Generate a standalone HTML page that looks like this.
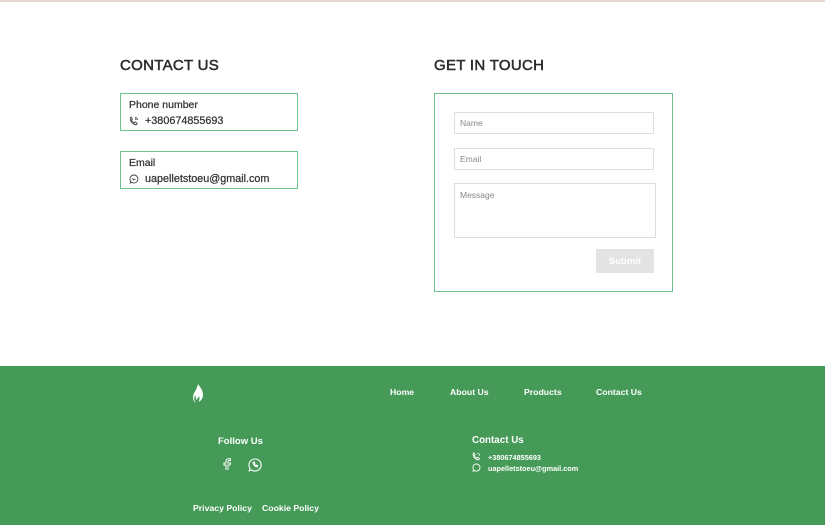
<!DOCTYPE html>
<html><head><meta charset="utf-8"><style>
*{box-sizing:border-box;margin:0;padding:0}
body{width:825px;height:525px;overflow:hidden;background:#fff;font-family:"Liberation Sans",sans-serif;color:#333;position:relative}
.top{position:absolute;left:0;top:0;width:825px;height:2px;background:#e8d6d2}
.abs{position:absolute}
h2{position:absolute;font-size:15px;font-weight:normal;letter-spacing:.3px;color:#2b2b2b;-webkit-text-stroke:.5px #2b2b2b}
.box{position:absolute;border:1px solid #6cc28c;width:178px;height:38px;padding:5px 8px}
.box .t{font-size:10.5px;color:#333;line-height:13px;-webkit-text-stroke:.25px #333}
.box .v{font-size:10.8px;color:#333;line-height:14px;margin-top:2px;display:flex;align-items:center;gap:6px;-webkit-text-stroke:.25px #333}
.form{position:absolute;left:434px;top:93px;width:239px;height:199px;border:1px solid #6cc28c}
.in{position:absolute;border:1px solid #ddd;font-size:8.5px;color:#888;padding:0 5px;display:flex;align-items:center}
.btn{position:absolute;left:161px;top:155px;width:58px;height:24px;background:#e3e3e3;color:#fff;font-size:9.5px;font-weight:bold;display:flex;align-items:center;justify-content:center}
.foot{position:absolute;left:0;top:366px;width:825px;height:159px;background:#459a58;color:#fff}
.foot .n{position:absolute;font-size:8.7px;font-weight:bold;top:21px}
.foot .s{position:absolute;font-size:8.7px;font-weight:bold}
</style></head><body>
<div class="top"></div>
<h2 style="left:120px;top:57px">CONTACT US</h2>
<h2 style="left:434px;top:57px">GET IN TOUCH</h2>
<div class="box" style="left:120px;top:93px"><div class="t">Phone number</div><div class="v"><svg width="10" height="10" viewBox="0 0 10 10" fill="none" stroke="#444" stroke-width="0.9"><path d="M2 1l1.5 2-1 1c.5 1.3 1.5 2.3 2.8 2.8l1-1L8.3 7.3 7.3 8.8C4 8.5 1.5 6 1.2 2.7z"/><path d="M6 1.5a2.5 2.5 0 012.5 2.5M6 3a1 1 0 011 1"/></svg>+380674855693</div></div>
<div class="box" style="left:120px;top:151px"><div class="t">Email</div><div class="v"><svg width="10" height="10" viewBox="0 0 10 10" fill="none" stroke="#444" stroke-width="0.9"><path d="M5 1a4 4 0 11-2.2 7.4L1.2 9l.6-1.6A4 4 0 015 1z"/><path d="M3.5 4l1 2 2-1"/></svg>uapelletstoeu@gmail.com</div></div>
<div class="form">
<div class="in" style="left:19px;top:18px;width:200px;height:22px">Name</div>
<div class="in" style="left:19px;top:54px;width:200px;height:22px">Email</div>
<div class="in" style="left:19px;top:89px;width:202px;height:55px;align-items:flex-start;padding-top:6px">Message</div>
<div class="btn">Submit</div>
</div>
<div class="foot">
<svg class="abs" style="left:192px;top:18px" width="14" height="21" viewBox="0 0 14 21" fill="#fff"><path d="M6 0c2 3 5 6 5 11 0 3-2 6-4.5 7 1-2 1.5-4 .5-6-.5 2-2 3-3 4 0-2 0-3-1-5-1 3-1 6 1 8-2-1-3-3-3-6 0-4 4-7 5-13z"/></svg>
<div class="n" style="left:390px">Home</div>
<div class="n" style="left:450px">About Us</div>
<div class="n" style="left:524px">Products</div>
<div class="n" style="left:596px">Contact Us</div>
<div class="s" style="left:218px;top:70px;font-size:9.5px">Follow Us</div>
<svg class="abs" style="left:221px;top:92px" width="12" height="13" viewBox="0 0 12 13" fill="none" stroke="#fff" stroke-width="1"><path d="M7 12V7h2l.5-2H7V3.5c0-.7.3-1 1-1h1.5V.8H7.5C5.8.8 5 1.8 5 3.3V5H3v2h2v5"/></svg>
<svg class="abs" style="left:248px;top:92px" width="14" height="14" viewBox="0 0 14 14" fill="none" stroke="#fff" stroke-width="1.1"><path d="M7 1a6 6 0 11-3.2 11L1.2 12.8l.8-2.5A6 6 0 017 1z"/><path d="M5 4.5c0 2 2 4 4 4.3l.8-1-1.3-.7-.6.6C7 7.3 6.5 6.8 6.2 6l.6-.6L6.2 4z"/></svg>
<div class="s" style="left:472px;top:69px;font-size:9.8px">Contact Us</div>
<svg class="abs" style="left:472px;top:86px" width="9" height="9" viewBox="0 0 10 10" fill="none" stroke="#fff" stroke-width="1"><path d="M2 1l1.5 2-1 1c.5 1.3 1.5 2.3 2.8 2.8l1-1L8.3 7.3 7.3 8.8C4 8.5 1.5 6 1.2 2.7z"/><path d="M6 1.5a2.5 2.5 0 012.5 2.5"/></svg>
<div class="s" style="left:488px;top:87px;font-size:7.3px">+380674855693</div>
<svg class="abs" style="left:472px;top:97px" width="9" height="9" viewBox="0 0 10 10" fill="none" stroke="#fff" stroke-width="1"><path d="M5 1a4 4 0 11-2.2 7.4L1.2 9l.6-1.6A4 4 0 015 1z"/></svg>
<div class="s" style="left:488px;top:98px;font-size:7.3px">uapelletstoeu@gmail.com</div>
<div class="s" style="left:193px;top:137px">Privacy Policy</div>
<div class="s" style="left:262px;top:137px">Cookie Policy</div>
</div>
</body></html>
